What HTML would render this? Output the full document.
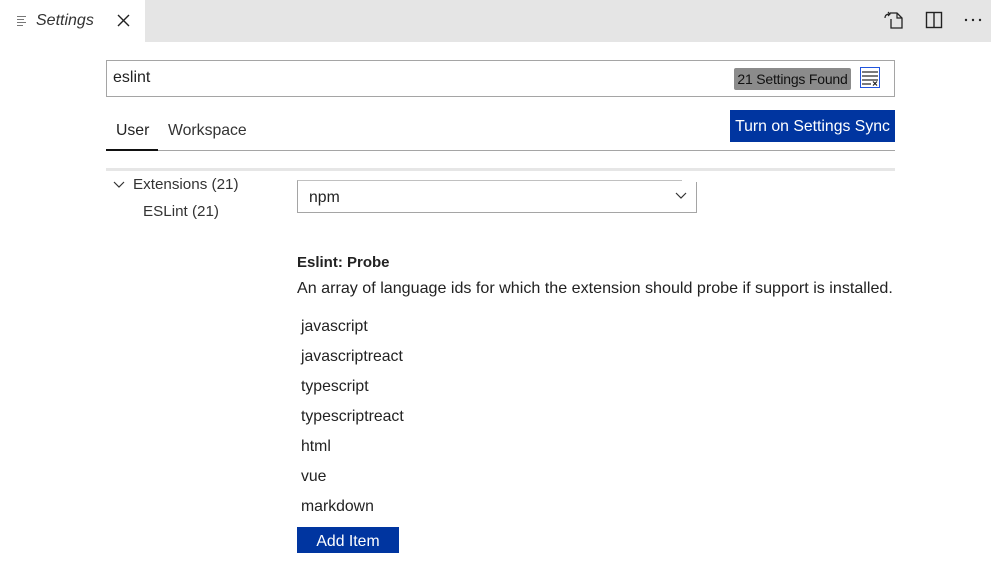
<!DOCTYPE html>
<html><head><style>
body{margin:0;width:991px;height:563px;background:#fff;font-family:"Liberation Sans",sans-serif;color:#222;position:relative;overflow:hidden;font-size:15.8px}
.a{position:absolute;white-space:nowrap}
</style></head><body>
<div class="a" style="left:0;top:0;width:991px;height:42px;background:#e5e5e5"></div>
<div class="a" style="left:0;top:0;width:145px;height:42px;background:#fff"></div>
<svg class="a" style="left:16px;top:15px" width="12" height="12"><g stroke="#777" stroke-width="1"><line x1="1" y1="1.5" x2="10" y2="1.5"/><line x1="1" y1="4.5" x2="8" y2="4.5"/><line x1="1" y1="7.5" x2="10" y2="7.5"/><line x1="1" y1="10.5" x2="7" y2="10.5"/></g></svg>
<div class="a" style="left:36px;top:12px;font-style:italic;font-size:16px;color:#333">Settings</div>
<svg class="a" style="left:117px;top:14px" width="13" height="13"><path d="M1 1L12 12M12 1L1 12" stroke="#222" stroke-width="1.4"/></svg>
<svg class="a" style="left:883px;top:10px" width="22" height="20"><path d="M7 3h7l5 5v10H8V9" fill="none" stroke="#222" stroke-width="1.3"/><path d="M14 3v5h5" fill="none" stroke="#222" stroke-width="1.2"/><path d="M2 8c0-3 2-4 5-4M5 2l2 2-2 2" fill="none" stroke="#222" stroke-width="1.2"/></svg>
<svg class="a" style="left:925px;top:11px" width="18" height="18"><rect x="1.5" y="1.5" width="15" height="15" fill="none" stroke="#222" stroke-width="1.4"/><line x1="9" y1="1.5" x2="9" y2="16.5" stroke="#222" stroke-width="1.4"/></svg>
<svg class="a" style="left:964px;top:18px" width="20" height="4"><g fill="#222"><circle cx="2" cy="2" r="1.2"/><circle cx="9" cy="2" r="1.2"/><circle cx="16" cy="2" r="1.2"/></g></svg>

<div class="a" style="left:106px;top:60px;width:787px;height:35px;border:1px solid #a5a5a5"></div>
<div class="a" style="left:113px;top:69px;font-size:16px">eslint</div>
<div class="a" style="left:734px;top:68px;width:117px;height:22px;background:#8b8b8b;border-radius:2px;font-size:14px;line-height:22px;text-align:center;color:#111;letter-spacing:-0.2px">21 Settings Found</div>
<div class="a" style="left:860px;top:67px;width:18px;height:19px;border:1px solid #2255dd"></div>
<svg class="a" style="left:861px;top:68px" width="18" height="19"><g stroke="#222" stroke-width="1.2"><line x1="1" y1="4" x2="17" y2="4"/><line x1="1" y1="8" x2="17" y2="8"/><line x1="1" y1="12" x2="17" y2="12"/><line x1="1" y1="16" x2="10" y2="16"/><path d="M12 13.5l4 4M16 13.5l-4 4"/></g></svg>

<div class="a" style="left:116px;top:122px">User</div>
<div class="a" style="left:168px;top:122px;color:#333">Workspace</div>
<div class="a" style="left:106px;top:150px;width:789px;height:1px;background:#a5a5a5"></div>
<div class="a" style="left:106px;top:149px;width:52px;height:2px;background:#111"></div>
<div class="a" style="left:730px;top:110px;width:165px;height:32px;background:#0035a0;color:#fff;line-height:34px;text-align:center">Turn on Settings Sync</div>
<div class="a" style="left:106px;top:168px;width:789px;height:3px;background:#e6e6e6"></div>

<svg class="a" style="left:113px;top:180px" width="12" height="10"><path d="M1 2l5 5 5-5" fill="none" stroke="#333" stroke-width="1.2"/></svg>
<div class="a" style="left:133px;top:176px;color:#333;font-size:15.2px">Extensions (21)</div>
<div class="a" style="left:143px;top:203px;color:#333;font-size:15.2px">ESLint (21)</div>

<div class="a" style="left:297px;top:180px;width:398px;height:31px;border:1px solid #a5a5a5;border-top-color:#c0c0c0"></div>
<div class="a" style="left:682px;top:178px;width:16px;height:4px;background:#fff"></div>
<div class="a" style="left:309px;top:189px">npm</div>
<svg class="a" style="left:675px;top:192px" width="12" height="8"><path d="M1 1l5 5 5-5" fill="none" stroke="#333" stroke-width="1.2"/></svg>

<div class="a" style="left:297px;top:254px;font-size:15px;font-weight:bold">Eslint: Probe</div>
<div class="a" style="left:297px;top:279px;color:#222;font-size:16.1px">An array of language ids for which the extension should probe if support is installed.</div>
<div class="a" style="left:301px;top:312px;line-height:30px">javascript<br>javascriptreact<br>typescript<br>typescriptreact<br>html<br>vue<br>markdown</div>
<div class="a" style="left:297px;top:527px;width:102px;height:26px;background:#0035a0;color:#fff;line-height:29px;text-align:center">Add Item</div>
</body></html>
